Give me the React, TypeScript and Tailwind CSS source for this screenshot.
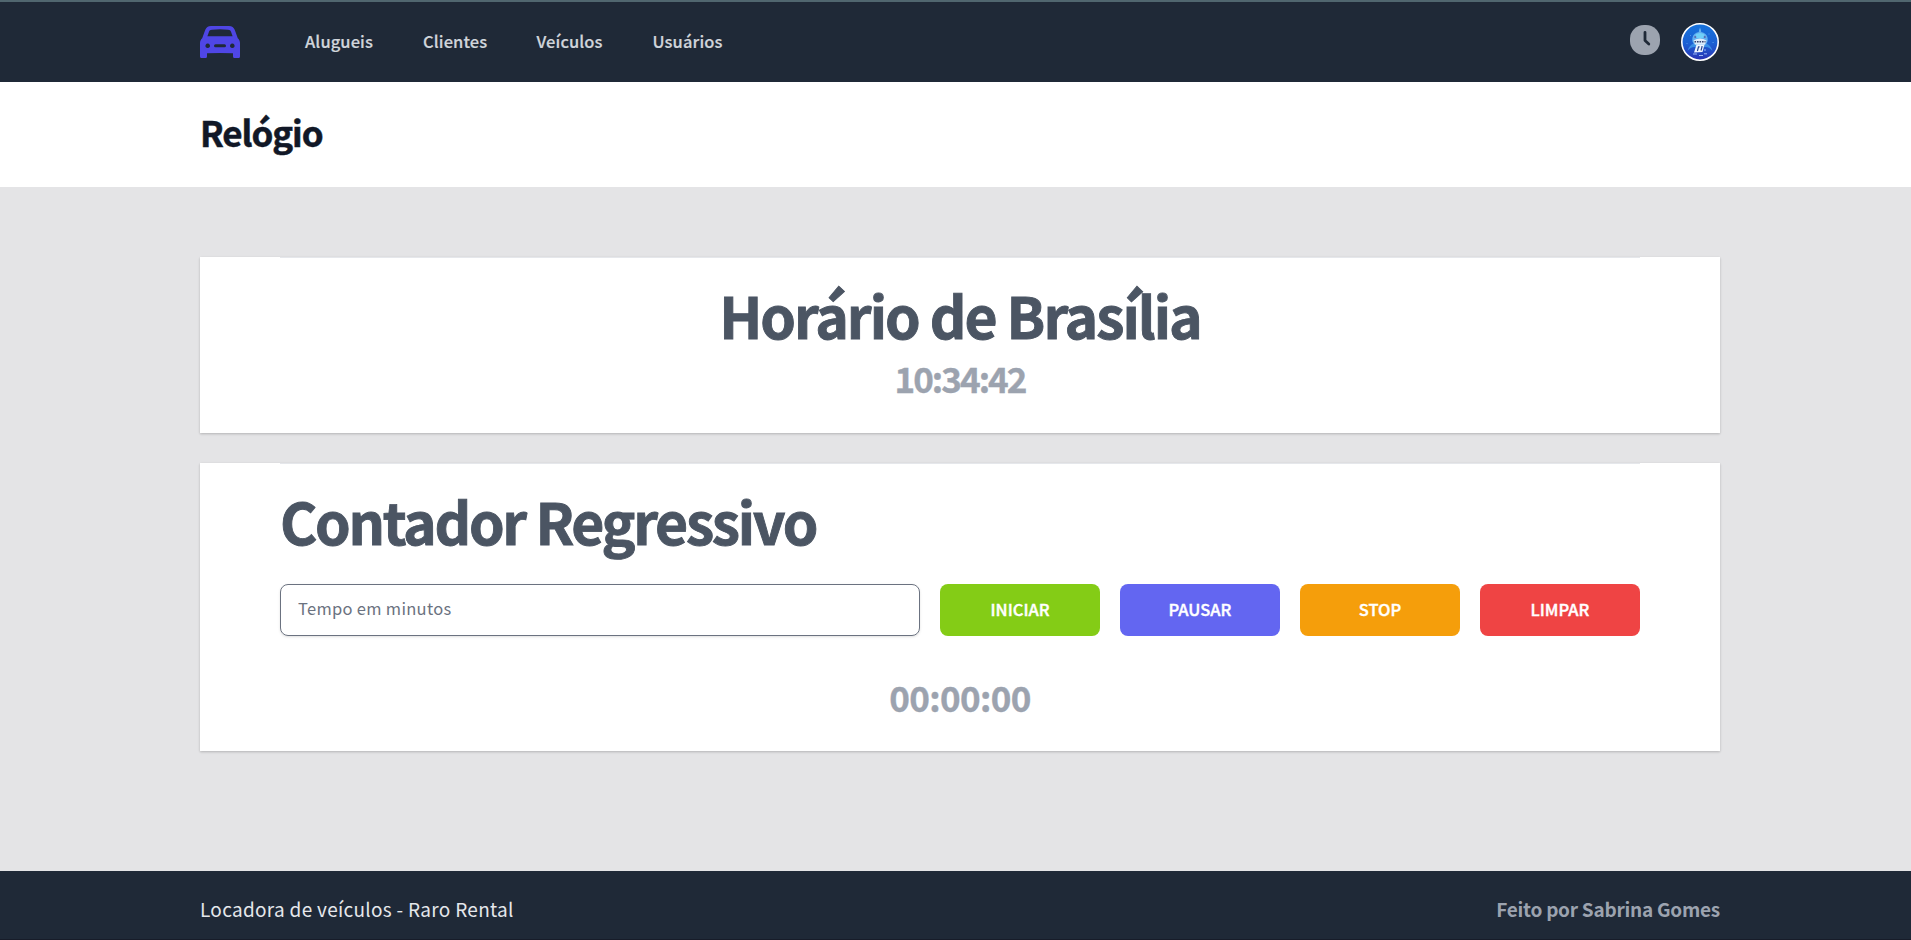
const font = "font-['Noto_Sans_CJK_SC','Open_Sans',sans-serif]";

function CarIcon() {
  return (
    <svg width="40" height="32" viewBox="0 0 40 32" className="block">
      <path
        fill="#4f46e5"
        fillRule="evenodd"
        d="M11 0H29C32 0 33.7 1.4 34.7 3.8L37.8 12.2C39.3 13.5 40 15 40 17V30.5Q40 32 38.5 32H34.5Q33 32 33 30.5V27.3Q20 26.5 7 27.3V30.5Q7 32 5.5 32H1.5Q0 32 0 30.5V17C0 15 .7 13.5 2.2 12.2L5.3 3.8C6.3 1.4 8 0 11 0ZM12 3.7C10.2 3.8 9.4 4.5 8.9 6L7.4 10.2H32.6L31.1 6C30.6 4.5 29.8 3.8 28 3.7Q20 3 12 3.7ZM7.7 17.5a2.3 2.3 0 1 0 .01 0ZM32.3 17.5a2.3 2.3 0 1 0 .01 0ZM15.5 18.3a1.5 1.5 0 0 0 0 3H24.5a1.5 1.5 0 0 0 0-3Z"
      />
    </svg>
  );
}

function ClockIcon() {
  return (
    <svg width="30" height="30" viewBox="0 0 30 30" className="block">
      <rect width="30" height="30" rx="14" fill="#9ca3af" />
      <path d="M15 7.3V15.5L18.8 19" fill="none" stroke="#1f2937" strokeWidth="2.8" strokeLinecap="round" strokeLinejoin="round" />
    </svg>
  );
}

function Avatar() {
  return (
    <svg width="38" height="38" viewBox="0 0 38 38" className="block">
      <defs>
        <linearGradient id="sea" x1="0" y1="0" x2="0" y2="1">
          <stop offset="0" stopColor="#1673dc" />
          <stop offset=".55" stopColor="#1b5fd2" />
          <stop offset="1" stopColor="#2b33b4" />
        </linearGradient>
      </defs>
      <circle cx="19" cy="19" r="18.2" fill="url(#sea)" stroke="#fff" strokeWidth="1.6" />
      <path d="M6.5 28Q8 22 13 20.5L25 20.5Q30 22 31.5 28Q28 23.5 24 24L14 24Q10 23.5 6.5 28Z" fill="#3a8fe6" />
      <path d="M19 4.5Q20 6.5 20.2 9Q25.5 10 26.5 14.5Q27.5 19.5 24 22H14Q10.5 19.5 11.5 14.5Q12.5 10 17.8 9Q18 6.5 19 4.5Z" fill="#62b0f0" />
      <path d="M14.5 11.5Q19 8.5 23.5 11.5L22 15H16Z" fill="#6fd0f8" />
      <path d="M12.5 17.5Q19 13.5 25.5 17.5L24 21.5H14Z" fill="#dcecfa" />
      <path d="M13.5 18.8H24.5" stroke="#35406f" strokeWidth="1.4" strokeDasharray="1.6 .9" />
      <path d="M15.5 21.5H23.5L21.5 29L13 29.5Z" fill="#eef5ff" />
      <path d="M17.6 23.5L16.4 28M21.2 23.2L20 27.5M17.4 23.8H18.6M20.4 23.5H21.2" stroke="#27458f" strokeWidth="1.2" />
      <path d="M13.5 13.6l1.3 .8M24.5 13.6l-1.3 .8" stroke="#5a4c94" strokeWidth="1.5" />
      <path d="M12 31H16M18 32.5H22M23 30.8H26M23 27H25" stroke="#a9c4fa" strokeWidth=".9" />
      <path d="M5.5 20.5h1M31.5 19.5h1.2M27.5 11h1M9 12.5h1" stroke="#4f95ea" strokeWidth="1" />
    </svg>
  );
}

const links = [
  { label: "Alugueis", cls: "w-[118px]" },
  { label: "Clientes", cls: "w-[113.5px]" },
  { label: "Veículos", cls: "w-[116px]" },
  { label: "Usuários", cls: "" },
];

const buttons = [
  { label: "INICIAR", cls: "bg-[#84cc16]" },
  { label: "PAUSAR", cls: "bg-[#6366f1]" },
  { label: "STOP", cls: "bg-[#f59e0b]" },
  { label: "LIMPAR", cls: "bg-[#ef4444]" },
];

const card = "bg-white px-20 shadow-[0_1px_3px_rgba(0,0,0,0.1),0_1px_2px_rgba(0,0,0,0.12)]";
const title = "text-[57px] leading-[60px] font-bold text-[#4b5563] [-webkit-text-stroke:0.9px_#4b5563]";
const time = "text-[35px] leading-10 font-bold text-[#9ca3af] [-webkit-text-stroke:0.4px_#9ca3af]";

export default function App() {
  return (
    <div className={`flex h-[940px] flex-col overflow-hidden bg-[#e4e4e6] ${font}`}>
      <nav className="h-[82px] shrink-0 border-t-2 border-[#50666f] bg-[#1f2937]">
        <div className="ml-[200px] flex h-20 w-[1520px] items-center">
          <CarIcon />
          <div className="-mt-[2px] ml-[65px] flex text-[16.5px] leading-6 font-medium tracking-[0.1px] text-[#d1d5db] [-webkit-text-stroke:0.2px_#d1d5db]">
            {links.map((l) => (
              <a key={l.label} className={l.cls}>{l.label}</a>
            ))}
          </div>
          <div className="mr-px ml-auto flex items-center gap-[21px]">
            <div className="-mt-1"><ClockIcon /></div>
            <Avatar />
          </div>
        </div>
      </nav>
      <header className="h-[105px] shrink-0 bg-white">
        <h1 className="ml-[200px] w-[1520px] pt-[30px] text-[35px] leading-10 font-bold tracking-[-1.1px] text-[#111827] [-webkit-text-stroke:0.5px_#111827]">Relógio</h1>
      </header>
      <main className="ml-[200px] w-[1520px] grow pt-[70px]">
        <section className={`${card} h-[176px]`}>
          <div className="flex flex-col items-center border-t border-[#e5e7eb] pt-[26px]">
            <h2 className={`${title} tracking-[-1.98px]`}>Horário de Brasília</h2>
            <p className={`${time} mt-[14px] tracking-[-1.95px]`}>10:34:42</p>
          </div>
        </section>
        <section className={`${card} mt-[30px] h-[288px]`}>
          <div className="border-t border-[#e5e7eb] pt-[26px]">
            <h2 className={`${title} tracking-[-2.3px]`}>Contador Regressivo</h2>
            <div className="mt-[34px] flex h-[52px] gap-5">
              <input placeholder="Tempo em minutos" className="w-[640px] rounded-lg border border-[#6b7280] px-[17px] pb-[4px] text-[16.5px] tracking-[0.3px] shadow-sm placeholder:text-[#6b7280]" />
              {buttons.map((b) => (
                <button key={b.label} className={`w-40 rounded-lg pb-[2px] text-[16.5px] font-medium text-white [-webkit-text-stroke:0.4px_#fff] ${b.cls}`}>{b.label}</button>
              ))}
            </div>
            <p className={`${time} mt-[41px] text-center tracking-[-0.65px]`}>00:00:00</p>
          </div>
        </section>
      </main>
      <footer className="h-[69px] shrink-0 border-b border-[#171c29] bg-[#1f2937]">
        <div className="ml-[200px] flex w-[1520px] justify-between pt-[24px] text-[19px] leading-7">
          <span className="tracking-[0.3px] text-[#e5e7eb]">Locadora de veículos - Raro Rental</span>
          <span className="font-bold tracking-[-0.25px] text-[#9ca3af]">Feito por Sabrina Gomes</span>
        </div>
      </footer>
    </div>
  );
}
